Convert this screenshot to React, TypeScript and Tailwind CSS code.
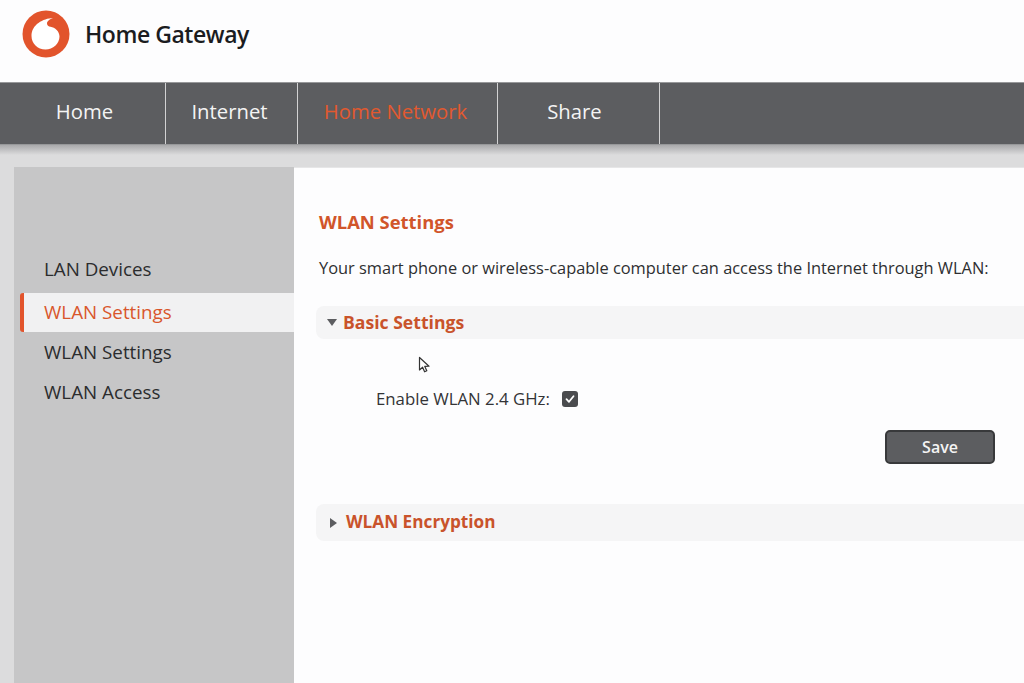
import React from 'react';

const Logo = () => (
  <svg width="48" height="48" viewBox="0 0 48 48">
    <circle cx="24" cy="24" r="23.5" fill="#e2542c" />
    <path
      d="M31 8C21 8.5 9.5 14.5 9.5 26C9.5 33.5 15.5 39.5 23.5 39.5C31 39.5 37.5 33.5 37.5 26.5C37.5 21.5 33 17.5 28.5 16.8C26.5 16.5 25 15.2 25 13.5C25 11 28 9 31 8Z"
      fill="#fff"
    />
  </svg>
);

const navItems = [
  { label: 'Home', width: 'w-[166px]', active: false, pad: 'pl-1' },
  { label: 'Internet', width: 'w-[132px]', active: false, pad: 'pr-1' },
  { label: 'Home Network', width: 'w-[200px]', active: true, pad: 'pr-1' },
  { label: 'Share', width: 'w-[162px]', active: false, pad: 'pr-2' },
];

const sideItems = [
  { label: 'LAN Devices', active: false },
  { label: 'WLAN Settings', active: true },
  { label: 'WLAN Settings', active: false },
  { label: 'WLAN Access', active: false },
];

const App: React.FC = () => {
  return (
    <div className="relative w-[1024px] h-[683px] overflow-hidden bg-[#dcdcdd] font-['Open_Sans',sans-serif]">
      {/* Header */}
      <div className="h-[82px] bg-[#fdfdfe] flex items-start pl-[22px] pt-[10px] gap-[15px]">
        <Logo />
        <span className="text-[23px] leading-[48px] font-semibold text-[#1b1c1f] tracking-[-0.45px]">Home Gateway</span>
      </div>

      {/* Nav */}
      <div className="h-[63px] bg-[#5c5d60] flex border-t border-b border-[#97989a]">
        {navItems.map((n) => (
          <div
            key={n.label + n.width}
            className={`${n.width} ${n.pad} pb-[4px] flex items-center justify-center border-r border-[#d2d2d3] text-[20.3px] ${n.active ? 'text-[#e2592f]' : 'text-[#f4f4f4]'}`}
          >
            {n.label}
          </div>
        ))}
      </div>
      <div className="h-[10px] bg-gradient-to-b from-[#a9a9ab] to-[#dcdcdd]" />

      {/* Body */}
      <div className="flex h-[528px] pl-[14px] pt-[12px]">
        <div className="w-[280px] bg-[#c6c6c7] pt-[82px] pl-[6px] shrink-0">
          {sideItems.map((s, i) => (
            <div
              key={i}
              className={`flex items-center text-[18.8px] ${i === 0 ? 'mb-[4px]' : ''} ${s.active ? 'h-[39px] bg-[#f1f1f2] text-[#d9562c] border-l-[4px] border-[#e2542c] rounded-l-[3px] pl-[20px]' : 'h-[40px] pl-[24px] text-[#2b2c2e]'}`}
            >
              {s.label}
            </div>
          ))}
        </div>
        <div className="flex-1 bg-[#fdfdfe] pl-[22px] pt-[41px] border-t border-[#e6e6e7]">
          <h2 className="pl-[3px] text-[18.4px] leading-[26px] font-bold text-[#d1552a]">WLAN Settings</h2>
          <p className="pl-[3px] mt-[20px] text-[16.4px] leading-[26px] text-[#2e2f31] whitespace-nowrap">
            Your smart phone or wireless-capable computer can access the Internet through WLAN:
          </p>

          <div className="mt-[25px] h-[33px] bg-[#f5f5f6] rounded-l-[8px] flex items-center pl-[11px]">
            <span className="w-0 h-0 border-l-[5px] border-r-[5px] border-t-[7px] border-l-transparent border-r-transparent border-t-[#5c5d60]" />
            <span className="ml-[6px] text-[17.6px] font-bold text-[#c9532b]">Basic Settings</span>
          </div>

          <div className="mt-[46px] h-[28px] flex items-center pl-[60px]">
            <span className="text-[16.8px] text-[#333436] w-[175px] whitespace-nowrap">Enable WLAN 2.4 GHz:</span>
            <span className="ml-[11px] w-[16px] h-[16px] rounded-[3px] bg-[#4a4b4e] flex items-center justify-center">
              <svg width="12" height="12" viewBox="0 0 12 12" fill="none">
                <path d="M2.5 6.2L5 8.8L9.5 3.2" stroke="#fff" strokeWidth="1.8" strokeLinecap="round" strokeLinejoin="round" />
              </svg>
            </span>
          </div>

          <div className="mt-[17px] flex justify-end pr-[29px]">
            <button className="w-[110px] h-[34px] bg-[#5c5d60] border-2 border-[#38393b] rounded-[5px] text-[16px] font-semibold text-[#f4f4f4]">
              Save
            </button>
          </div>

          <div className="mt-[40px] h-[37px] bg-[#f5f5f6] rounded-l-[8px] flex items-center pl-[14px]">
            <span className="w-0 h-0 border-t-[5px] border-b-[5px] border-l-[7px] border-t-transparent border-b-transparent border-l-[#5c5d60]" />
            <span className="ml-[9px] pb-[2px] text-[17.2px] font-bold text-[#c9532b]">WLAN Encryption</span>
          </div>
        </div>
      </div>

      {/* Mouse pointer */}
      <svg className="absolute left-[418px] top-[356px]" width="13" height="18" viewBox="0 0 13 18" fill="none">
        <path d="M1.5 1.5V14L4.6 11.2L6.6 15.8L8.8 14.8L6.8 10.4L11 10.2Z" fill="#fff" stroke="#333" strokeWidth="1.2" strokeLinejoin="round" />
      </svg>
    </div>
  );
};

export default App;
